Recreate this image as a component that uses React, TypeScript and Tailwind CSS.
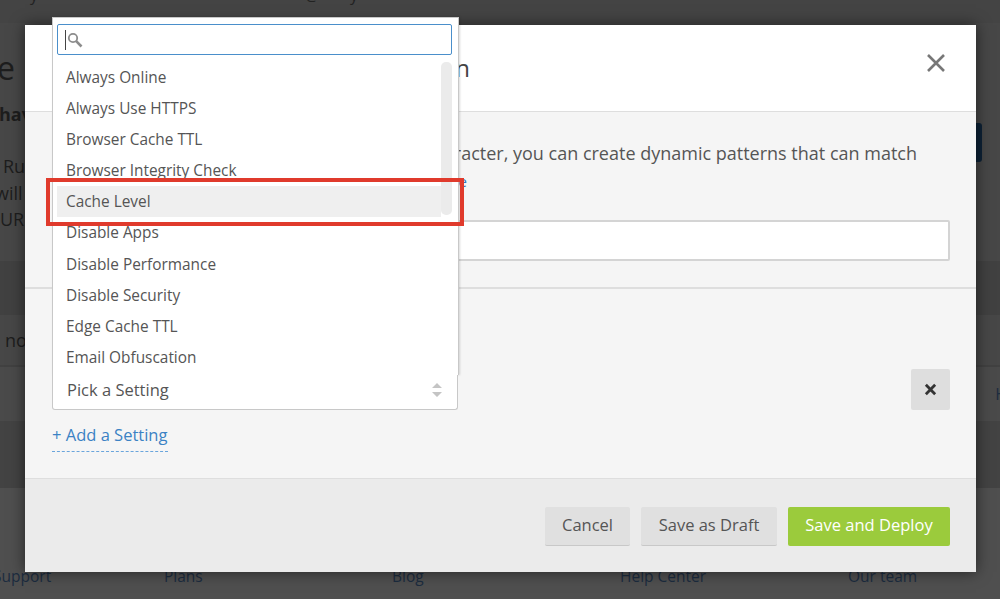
import React from "react";

const font = { fontFamily: '"Open Sans", "Noto Sans", sans-serif' };

const options = [
  "Always Online",
  "Always Use HTTPS",
  "Browser Cache TTL",
  "Browser Integrity Check",
  "Cache Level",
  "Disable Apps",
  "Disable Performance",
  "Disable Security",
  "Edge Cache TTL",
  "Email Obfuscation",
];

function PageBehind() {
  return (
    <div className="h-[599px] w-[1000px] overflow-hidden bg-[#4f4f4f] text-[#1d1d1d]">
      <div className="flex h-[23px] items-start bg-[#444444] text-[16px] leading-[6px] text-[#222222]">
        <span className="-mt-[8px] ml-[30px] w-[275px]">y</span>
        <span className="-mt-[8px] w-[45px]">@</span>
        <span className="-mt-[8px]">y</span>
      </div>
      <div className="flex h-[238px] bg-[#474747]">
        <div className="pt-[26px]">
          <div className="-ml-[3px] text-[32px] leading-[38px]">e</div>
          <div className="-ml-[1px] mt-[15px] text-[18px] leading-6 font-bold">hav</div>
          <div className="ml-[3px] mt-[27px] text-[18px] leading-[26.5px]">Ru</div>
          <div className="-ml-[5px] text-[18px] leading-[26.5px]">will</div>
          <div className="text-[18px] leading-[27px]">UR</div>
        </div>
        <div className="ml-auto mr-[18px] mt-[100px] h-[39px] w-[6px] rounded-r-[3px] bg-[#0d2236]" />
      </div>
      <div className="h-[54px] bg-[#414141]" />
      <div className="flex h-[52px] items-center border-b-2 border-[#414141] bg-[#474747] pl-[5px] text-[18px]">no</div>
      <div className="flex h-[54px] items-center justify-end bg-[#4a4a4a] text-[16px] text-[#1c2c3f]">
        <span className="-mr-[11px]">Hi</span>
      </div>
      <div className="h-[67px] bg-[#434343]" />
      <div className="flex h-[112px] items-start pt-[76px] text-[15.5px] leading-6 text-[#1c2c3f]">
        <span className="ml-[-7px] w-[171px]">Support</span>
        <span className="w-[228px]">Plans</span>
        <span className="w-[228px]">Blog</span>
        <span className="w-[228px]">Help Center</span>
        <span>Our team</span>
      </div>
    </div>
  );
}

function Modal() {
  return (
    <div className="absolute left-[25px] top-[25px] flex h-[547px] w-[951px] flex-col bg-[#f5f5f5] shadow-[0_0_14px_rgba(0,0,0,0.55)]">
      <div className="flex h-[87px] shrink-0 border-b border-[#dedede] bg-white">
        <div className="mt-[24px] w-[445px] text-right text-[24px] leading-[38px] text-[#444444]">n</div>
        <button className="ml-[457px] mt-[29px] h-[18px] w-[18px] text-[#777777]">
          <svg viewBox="0 0 18 18" className="h-[18px] w-[18px]" fill="none" stroke="currentColor" strokeWidth="2.6">
            <path d="M1 1 L17 17 M17 1 L1 17" />
          </svg>
        </button>
      </div>
      <div className="flex h-[177px] shrink-0 flex-col border-b-2 border-[#dedede] pl-[27px] pr-[26px]">
        <div className="mt-[27px] flex justify-end whitespace-nowrap pr-[33px] text-[18px] leading-[29px] text-[#555555]">
          By using the asterisk (*) character, you can create dynamic patterns that can match
        </div>
        <div className="w-[415px] text-right text-[15px] leading-[26px] whitespace-nowrap text-[#2f7bbf]">Learn more</div>
        <div className="mt-[26px] h-[41px] rounded-[2px] border-2 border-[#d4d4d4] bg-white" />
      </div>
      <div className="flex h-[189px] shrink-0 flex-col pl-[27px] pr-[26px]">
        <div className="mt-[80px] flex items-start justify-between">
          <div className="h-[41px] w-[406px]" />
          <button className="flex h-[41px] w-[39px] items-center justify-center rounded-[2px] bg-[#dedede] text-[#333333]">
            <svg viewBox="0 0 14 14" className="h-[13px] w-[13px]" fill="none" stroke="currentColor" strokeWidth="3">
              <path d="M2 2 L12 12 M12 2 L2 12" />
            </svg>
          </button>
        </div>
        <div className="mt-[14px] w-[116px] border-b border-dashed border-[#6aa5dc] pb-[5px] text-[16.5px] leading-[22px] whitespace-nowrap text-[#3b82c4]">
          + Add a Setting
        </div>
      </div>
      <div className="flex flex-1 items-start justify-end gap-[11px] border-t border-[#dedede] bg-[#ebebeb] pr-[26px] pt-[28px]">
        <button className="h-[39px] w-[85px] rounded-[2px] border-b border-[#c8c8c8] bg-[#e0e0e0] pb-[2px] text-[16.5px] text-[#555555]">Cancel</button>
        <button className="h-[39px] w-[136px] rounded-[2px] border-b border-[#c8c8c8] bg-[#e0e0e0] pb-[2px] text-[16.5px] text-[#555555]">Save as Draft</button>
        <button className="h-[39px] w-[162px] rounded-[2px] bg-[#9bcb3c] pb-[2px] text-[16.5px] font-medium text-white">Save and Deploy</button>
      </div>
    </div>
  );
}

function SettingDropdown() {
  return (
    <div className="absolute left-[52px] top-[17px] flex h-[393px] w-[407px] flex-col">
      <div className="relative flex h-[358px] shrink-0 flex-col overflow-hidden border border-b-0 border-[#c8c8c8] bg-white pl-[4px] pr-[6px] pt-[6px] shadow-[1px_0_2px_rgba(0,0,0,0.15)]">
        <div className="flex h-[31px] shrink-0 items-center rounded-[2px] border border-[#4a8fcb] bg-white pl-[7px]">
          <span className="h-[20px] w-px bg-[#444444]" />
          <svg viewBox="0 0 16 16" className="ml-px h-[16px] w-[16px] text-[#8c8c8c]" fill="none" stroke="currentColor">
            <circle cx="6" cy="6" r="4.2" strokeWidth="1.8" />
            <path d="M9.2 9.2 L14.5 14.5" strokeWidth="2.6" />
          </svg>
        </div>
        <ul className="mt-[7px] w-[384px]">
          {options.map((name) => (
            <li
              key={name}
              className={`flex h-[31.1px] items-center pl-[9px] text-[15.4px] text-[#555555] ${name === "Cache Level" ? "bg-[#efefef]" : ""}`}
            >
              {name}
            </li>
          ))}
        </ul>
        <div className="absolute right-[6px] top-[44px] h-[153px] w-[11px] rounded-[5px] bg-[#ebebeb]" />
      </div>
      <div className="relative flex h-[35px] w-[406px] shrink-0 items-center justify-between rounded-b-[3px] border-x border-b border-[#c8c8c8] bg-white pb-[4px] pl-[14px] pr-[15px] text-[16.5px] text-[#555555]">
        <span>Pick a Setting</span>
        <svg viewBox="0 0 10 14" className="h-[14px] w-[10px] text-[#c4c4c4]" fill="currentColor">
          <path d="M5 0 L10 5 L0 5 Z M0 9 L10 9 L5 14 Z" />
        </svg>
      </div>
    </div>
  );
}

export default function App() {
  return (
    <div className="relative h-[599px] w-[1000px] overflow-hidden" style={font}>
      <PageBehind />
      <Modal />
      <SettingDropdown />
      {/* annotation box around the Cache Level row */}
      <div className="absolute left-[46px] top-[178px] h-[48px] w-[418px] border-[4px] border-[#e03a2c]" />
    </div>
  );
}
